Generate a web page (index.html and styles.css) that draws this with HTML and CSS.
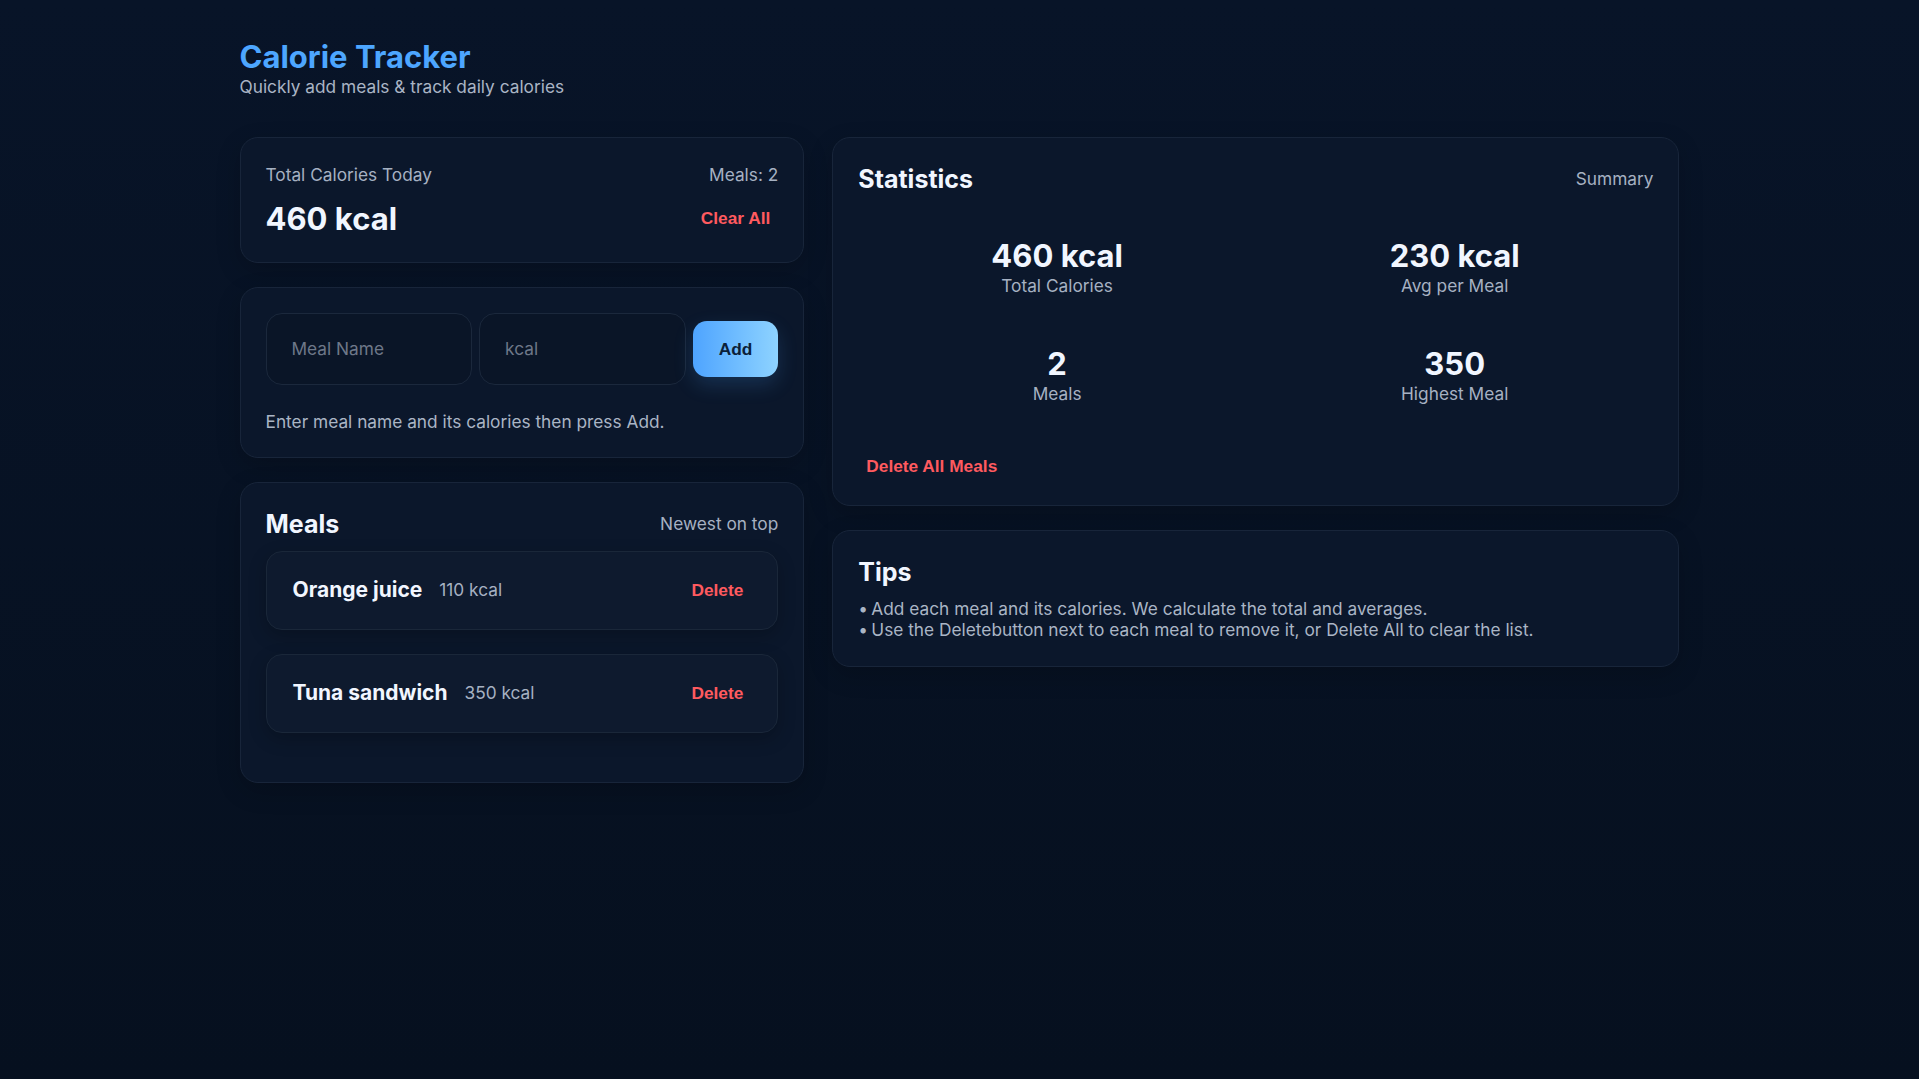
FILE: index.html
```html
<!DOCTYPE html>
<html lang="en">
<head>
<meta charset="utf-8">
<title>Calorie Tracker</title>
<link rel="stylesheet" href="styles.css">
</head>
<body>
<div class="app">
  <header class="app-header">
    <h1 class="app-title">Calorie Tracker</h1>
    <p class="app-subtitle">Quickly add meals &amp; track daily calories</p>
  </header>

  <main class="layout">
    <section class="col">
      <div class="card total-card">
        <div class="total-row">
          <span class="muted">Total Calories Today</span>
          <span class="muted">Meals: 2</span>
        </div>
        <div class="total-row total-row-main">
          <span class="total-value">460 kcal</span>
          <button class="text-btn" type="button">Clear All</button>
        </div>
      </div>

      <div class="card form-card">
        <form class="add-form">
          <input class="field" type="text" placeholder="Meal Name">
          <input class="field" type="text" placeholder="kcal">
          <button class="add-btn" type="button">Add</button>
        </form>
        <p class="hint">Enter meal name and its calories then press Add.</p>
      </div>

      <div class="card meals-card">
        <div class="card-head meals-head">
          <h2 class="card-title">Meals</h2>
          <span class="muted">Newest on top</span>
        </div>
        <ul class="meal-list">
          <li class="meal">
            <span class="meal-name">Orange juice</span>
            <span class="meal-kcal">110 kcal</span>
            <button class="text-btn meal-delete" type="button">Delete</button>
          </li>
          <li class="meal">
            <span class="meal-name">Tuna sandwich</span>
            <span class="meal-kcal">350 kcal</span>
            <button class="text-btn meal-delete" type="button">Delete</button>
          </li>
        </ul>
      </div>
    </section>

    <section class="col">
      <div class="card stats-card">
        <div class="card-head stats-head">
          <h2 class="card-title">Statistics</h2>
          <span class="muted">Summary</span>
        </div>
        <div class="stats-grid">
          <div class="stat">
            <div class="stat-value">460 kcal</div>
            <div class="stat-label">Total Calories</div>
          </div>
          <div class="stat">
            <div class="stat-value">230 kcal</div>
            <div class="stat-label">Avg per Meal</div>
          </div>
          <div class="stat">
            <div class="stat-value">2</div>
            <div class="stat-label">Meals</div>
          </div>
          <div class="stat">
            <div class="stat-value">350</div>
            <div class="stat-label">Highest Meal</div>
          </div>
        </div>
        <div class="stats-actions">
          <button class="text-btn" type="button">Delete All Meals</button>
        </div>
      </div>

      <div class="card tips-card">
        <h2 class="card-title tips-title">Tips</h2>
        <ul class="tips-list">
          <li>Add each meal and its calories. We calculate the total and averages.</li>
          <li>Use the Deletebutton next to each meal to remove it, or Delete All to clear the list.</li>
        </ul>
      </div>
    </section>
  </main>
</div>
</body>
</html>
```

FILE: styles.css
```css
* {
  box-sizing: border-box;
}

html, body {
  margin: 0;
  padding: 0;
}

body {
  min-height: 100vh;
  background: linear-gradient(180deg, #081428 0%, #06101f 100%);
  color: #eaf2ff;
  font-family: Inter, "Noto Sans", "Liberation Sans", sans-serif;
  font-size: 17.3px;
  line-height: 24px;
}

.app {
  width: 1440px;
  margin: 0 auto;
  padding-top: 38px;
}

.app-header {
  margin-bottom: 38px;
}

.app-title {
  margin: 0;
  font-size: 31px;
  line-height: 37px;
  font-weight: 700;
  color: #4da6ff;
}

.app-subtitle {
  margin: 0;
  font-size: 17.3px;
  line-height: 24px;
  color: #aab5c5;
}

.layout {
  display: grid;
  grid-template-columns: minmax(0, 2fr) minmax(0, 3fr);
  gap: 28px;
  align-items: start;
}

.col {
  display: flex;
  flex-direction: column;
  gap: 24px;
}

.card {
  background: #0b172b;
  border: 1px solid #18253a;
  border-radius: 18px;
  padding: 25px;
  box-shadow: 0 8px 24px rgba(0, 0, 0, 0.18);
}

.muted {
  color: #a6b1c2;
  font-size: 17.3px;
  line-height: 24px;
}

/* total card */
.total-row {
  display: flex;
  justify-content: space-between;
  align-items: center;
}

.total-row-main {
  margin-top: 13px;
}

.total-value {
  font-size: 31px;
  line-height: 37.2px;
  font-weight: 700;
  color: #f1f6ff;
}

.text-btn {
  background: none;
  border: none;
  padding: 3px 8px;
  font-family: "Liberation Sans", Arial, sans-serif;
  font-size: 17.3px;
  font-weight: 700;
  color: #ff5a5f;
  cursor: pointer;
}

/* form card */
.form-card {
  padding-bottom: 23px;
}

.add-form {
  display: flex;
  align-items: center;
  gap: 7px;
  margin: 0;
}

.field {
  flex: 1 1 0;
  min-width: 0;
  width: 0;
  box-sizing: content-box;
  height: 22px;
  padding: 24px 25px;
  background: #0a1527;
  border: 1px solid #1b283c;
  border-radius: 16px;
  font-family: inherit;
  font-size: 17.3px;
  line-height: 22px;
  color: #eaf2ff;
  outline: none;
}

.field::placeholder {
  color: #6e7889;
}

.add-btn {
  padding: 17.5px 26px;
  border: none;
  border-radius: 14px;
  background: linear-gradient(90deg, #4ea4ff 0%, #8ed3ff 100%);
  color: #0b2038;
  font-family: "Liberation Sans", Arial, sans-serif;
  font-size: 17.3px;
  font-weight: 700;
  box-shadow: 0 8px 20px rgba(77, 166, 255, 0.18);
  cursor: pointer;
}

.hint {
  margin: 25px 0 0;
  font-size: 17.3px;
  line-height: 24px;
  color: #aab5c5;
}

/* card head */
.card-head {
  display: flex;
  justify-content: space-between;
  align-items: center;
}

.card-title {
  margin: 0;
  font-size: 25px;
  line-height: 32.5px;
  font-weight: 700;
  color: #f1f6ff;
}

.meals-head {
  margin-bottom: 10px;
}

/* meals */
.meal-list {
  list-style: none;
  margin: 0;
  padding: 0;
}

.meal {
  display: flex;
  align-items: center;
  padding: 23.5px 26px;
  margin-bottom: 24px;
  background: #0e1a2e;
  border: 1px solid #1a2739;
  border-radius: 16px;
  box-shadow: 0 6px 18px rgba(0, 0, 0, 0.22);
}

.meal-name {
  font-size: 21px;
  line-height: 30px;
  font-weight: 700;
  color: #f1f6ff;
}

.meal-kcal {
  margin-left: 17px;
  font-size: 17.3px;
  color: #a6b1c2;
}

.meal-delete {
  margin-left: auto;
}

/* stats */
.stats-head {
  margin-bottom: 18px;
}

.stats-grid {
  display: grid;
  grid-template-columns: 1fr 1fr;
  row-gap: 1px;
}

.stat {
  text-align: center;
  padding: 23px 0;
}

.stat-value {
  font-size: 31px;
  line-height: 37.2px;
  font-weight: 700;
  color: #f1f6ff;
}

.stat-label {
  font-size: 17.3px;
  line-height: 24px;
  color: #a6b1c2;
}

.stats-actions {
  margin-top: 24px;
}

/* tips */
.tips-title {
  margin-bottom: 11px;
}

.tips-list {
  list-style: none;
  margin: 0;
  padding: 0;
  font-size: 17.3px;
  line-height: 20.76px;
  color: #aab5c5;
}

.tips-list li::before {
  content: "\2022";
  display: inline-block;
  width: 13px;
}
```
